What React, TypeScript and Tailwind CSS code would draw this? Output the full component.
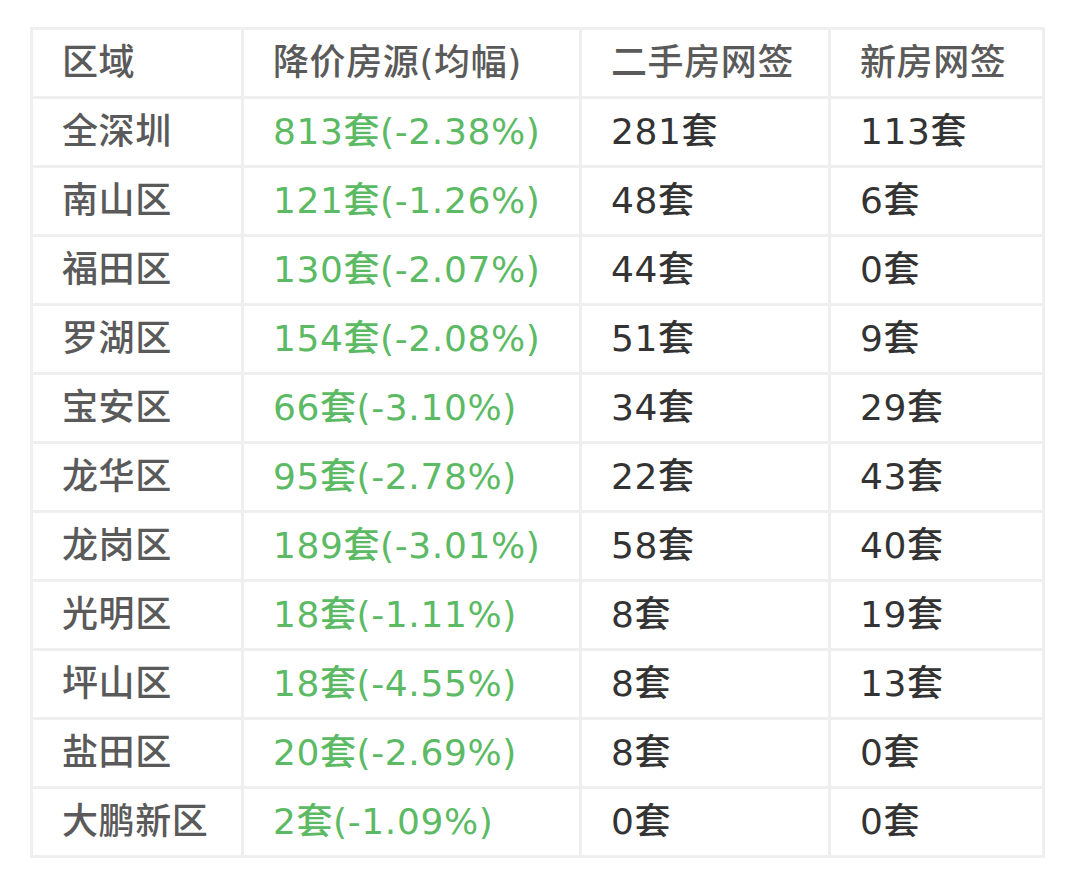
const rows = [
  ["全深圳", "813套(-2.38%)", "281套", "113套"],
  ["南山区", "121套(-1.26%)", "48套", "6套"],
  ["福田区", "130套(-2.07%)", "44套", "0套"],
  ["罗湖区", "154套(-2.08%)", "51套", "9套"],
  ["宝安区", "66套(-3.10%)", "34套", "29套"],
  ["龙华区", "95套(-2.78%)", "22套", "43套"],
  ["龙岗区", "189套(-3.01%)", "58套", "40套"],
  ["光明区", "18套(-1.11%)", "8套", "19套"],
  ["坪山区", "18套(-4.55%)", "8套", "13套"],
  ["盐田区", "20套(-2.69%)", "8套", "0套"],
  ["大鹏新区", "2套(-1.09%)", "0套", "0套"],
];

const cell = "h-[69px] border-[3px] border-[#efefef] pl-[29px] pr-1 text-left align-middle whitespace-nowrap";

export default function App() {
  return (
    <div className="min-h-[891px] w-[1080px] bg-white pt-[27px] pl-[30px] font-['DejaVu_Sans','Noto_Sans_CJK_SC',sans-serif] text-[36px] leading-none tracking-[0.6px] font-medium">
      <table className="table-fixed border-collapse w-[1012px]">
        <colgroup>
          <col className="w-[211px]" />
          <col className="w-[338px]" />
          <col className="w-[249px]" />
          <col className="w-[214px]" />
        </colgroup>
        <thead>
          <tr className="text-[#5a5a5a]">
            <th className={`${cell} font-medium`}>区域</th>
            <th className={`${cell} font-medium`}>降价房源(均幅)</th>
            <th className={`${cell} font-medium`}>二手房网签</th>
            <th className={`${cell} font-medium`}>新房网签</th>
          </tr>
        </thead>
        <tbody>
          {rows.map((r) => (
            <tr key={r[0]}>
              <td className={`${cell} text-[#5a5a5a]`}>{r[0]}</td>
              <td className={`${cell} text-[#5cba64]`}>{r[1]}</td>
              <td className={`${cell} text-[#333333]`}>{r[2]}</td>
              <td className={`${cell} text-[#333333]`}>{r[3]}</td>
            </tr>
          ))}
        </tbody>
      </table>
    </div>
  );
}
